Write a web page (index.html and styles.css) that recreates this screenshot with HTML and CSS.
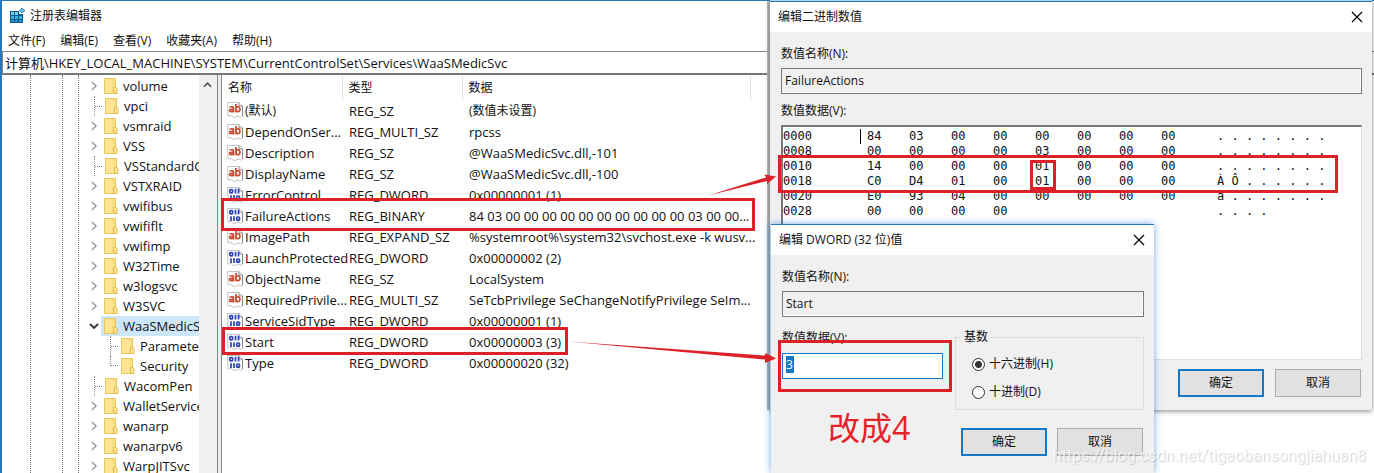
FILE: index.html
```
<!DOCTYPE html>
<html lang="zh-CN">
<head>
<meta charset="utf-8">
<title>注册表编辑器</title>
<link rel="stylesheet" href="styles.css">
</head>
<body>
<svg class="defs" aria-hidden="true">
  <symbol id="folder" viewBox="0 0 14 16">
    <path d="M.5.5h11v15H.5z" fill="#fbdf83" stroke="#ecc65d"/>
    <path d="M1 1h7v14H1z" fill="#fde592"/>
    <path d="M9.500 9.500q3-1 3.500 1v5H9.500z" fill="#fde592" stroke="#e3b84a"/>
  </symbol>
  <symbol id="right" viewBox="0 0 8 10"><path d="M2 1l4 4-4 4" fill="none" stroke="#a0a0a0" stroke-width="1.600"/></symbol>
  <symbol id="down" viewBox="0 0 10 8"><path d="M1 2l4 4 4-4" fill="none" stroke="#333" stroke-width="1.800"/></symbol>
  <symbol id="page" viewBox="0 0 16 16">
    <path d="M.5.5h11.500l3.500 3.500v10.500l-2 .5-1.500-1-2 .5-2 1-2-.5-2-1.500-3 .5z" fill="#fff" stroke="#c4c4c4"/>
    <path d="M12 .5V4h3.500v10" fill="none" stroke="#858c93"/>
  </symbol>
  <symbol id="str" viewBox="0 0 16 16">
    <use href="#page"/>
    <g fill="none" stroke="#c8472d" stroke-width="1.700">
      <path d="M2.500 5.200q4.200-1.300 4 1.200v4M6.500 7.400q-4.200-.3-4 1.300 1 2 4 0"/>
      <path d="M9 2v8.300M9 6q1-1.500 2.500-1.200 1.500.5 1.500 2.500-.2 2.300-2 2.300-1.200 0-2-1"/>
    </g>
  </symbol>
  <symbol id="bin" viewBox="0 0 16 16">
    <use href="#page"/>
    <g fill="none" stroke="#2841b5" stroke-width="1.700">
      <rect x="2.800" y="2.600" width="2.800" height="3.200" rx="1"/>
      <path d="M8.500 1.800v4.800M11.500 1.800v4.800M4 8.200V13M7 8.200V13"/>
      <rect x="9.700" y="9" width="2.800" height="3.200" rx="1"/>
    </g>
  </symbol>
</svg>

<main class="regedit">
  <header class="titlebar">
    <svg class="app-icon" viewBox="0 0 16 16" aria-hidden="true">
      <path d="M1 3h9v3h4v9H1z" fill="#0d5c8c"/>
      <path d="M2 4h3v3H2zM6 4h3v3H6z" fill="#6fd0f2"/>
      <path d="M2 8h3v3H2zM6 8h3v3H6zM10 8h3v3h-3z" fill="#35b0e0"/>
      <path d="M2 12h3v2H2zM6 12h3v2H6zM10 12h3v2h-3z" fill="#1c94cb"/>
      <path d="M13 0l3 2.500-3 2.500-2.500-2.500z" fill="#58c3ec" stroke="#0d6da3" stroke-width=".7"/>
    </svg>
    <h1>注册表编辑器</h1>
  </header>
  <nav class="menu">
    <button>文件(F)</button><button>编辑(E)</button><button>查看(V)</button><button>收藏夹(A)</button><button>帮助(H)</button>
  </nav>
  <input class="address" aria-label="路径" value="计算机\HKEY_LOCAL_MACHINE\SYSTEM\CurrentControlSet\Services\WaaSMedicSvc">
  <div class="panes">
    <div class="tree-pane">
      <div class="guides"><i></i><i></i><i></i></div>
      <ul class="tree">
        <li><svg class="tog"><use href="#right"/></svg><svg class="fold"><use href="#folder"/></svg><span>volume</span></li>
        <li class="leaf"><svg class="fold"><use href="#folder"/></svg><span>vpci</span></li>
        <li><svg class="tog"><use href="#right"/></svg><svg class="fold"><use href="#folder"/></svg><span>vsmraid</span></li>
        <li><svg class="tog"><use href="#right"/></svg><svg class="fold"><use href="#folder"/></svg><span>VSS</span></li>
        <li class="leaf"><svg class="fold"><use href="#folder"/></svg><span>VSStandardC</span></li>
        <li><svg class="tog"><use href="#right"/></svg><svg class="fold"><use href="#folder"/></svg><span>VSTXRAID</span></li>
        <li><svg class="tog"><use href="#right"/></svg><svg class="fold"><use href="#folder"/></svg><span>vwifibus</span></li>
        <li><svg class="tog"><use href="#right"/></svg><svg class="fold"><use href="#folder"/></svg><span>vwififlt</span></li>
        <li><svg class="tog"><use href="#right"/></svg><svg class="fold"><use href="#folder"/></svg><span>vwifimp</span></li>
        <li><svg class="tog"><use href="#right"/></svg><svg class="fold"><use href="#folder"/></svg><span>W32Time</span></li>
        <li><svg class="tog"><use href="#right"/></svg><svg class="fold"><use href="#folder"/></svg><span>w3logsvc</span></li>
        <li><svg class="tog"><use href="#right"/></svg><svg class="fold"><use href="#folder"/></svg><span>W3SVC</span></li>
        <li class="selected"><svg class="tog open"><use href="#down"/></svg><svg class="fold"><use href="#folder"/></svg><span>WaaSMedicS</span></li>
        <li class="child"><svg class="fold"><use href="#folder"/></svg><span>Parameter</span></li>
        <li class="child last"><svg class="fold"><use href="#folder"/></svg><span>Security</span></li>
        <li class="leaf"><svg class="fold"><use href="#folder"/></svg><span>WacomPen</span></li>
        <li><svg class="tog"><use href="#right"/></svg><svg class="fold"><use href="#folder"/></svg><span>WalletService</span></li>
        <li><svg class="tog"><use href="#right"/></svg><svg class="fold"><use href="#folder"/></svg><span>wanarp</span></li>
        <li><svg class="tog"><use href="#right"/></svg><svg class="fold"><use href="#folder"/></svg><span>wanarpv6</span></li>
        <li><svg class="tog"><use href="#right"/></svg><svg class="fold"><use href="#folder"/></svg><span>WarpJITSvc</span></li>
      </ul>
      <div class="scroll"><svg viewBox="0 0 10 8" aria-hidden="true"><path d="M1 6l4-4 4 4" fill="none" stroke="#505050" stroke-width="1.800"/></svg></div>
    </div>
    <div class="splitter"></div>
    <div class="list-pane">
      <table class="values">
        <colgroup><col class="c-name"><col class="c-type"><col class="c-data"></colgroup>
        <thead><tr><th>名称</th><th>类型</th><th>数据</th></tr></thead>
        <tbody>
          <tr><td><svg><use href="#str"/></svg><small>(默认)</small></td><td>REG_SZ</td><td><small>(数值未设置)</small></td></tr>
          <tr><td><svg><use href="#str"/></svg>DependOnSer...</td><td>REG_MULTI_SZ</td><td>rpcss</td></tr>
          <tr><td><svg><use href="#str"/></svg>Description</td><td>REG_SZ</td><td>@WaaSMedicSvc.dll,-101</td></tr>
          <tr><td><svg><use href="#str"/></svg>DisplayName</td><td>REG_SZ</td><td>@WaaSMedicSvc.dll,-100</td></tr>
          <tr><td><svg><use href="#bin"/></svg>ErrorControl</td><td>REG_DWORD</td><td>0x00000001 (1)</td></tr>
          <tr><td><svg><use href="#bin"/></svg>FailureActions</td><td>REG_BINARY</td><td>84 03 00 00 00 00 00 00 00 00 00 00 03 00 00...</td></tr>
          <tr><td><svg><use href="#str"/></svg>ImagePath</td><td>REG_EXPAND_SZ</td><td>%systemroot%\system32\svchost.exe -k wusv...</td></tr>
          <tr><td><svg><use href="#bin"/></svg>LaunchProtected</td><td>REG_DWORD</td><td>0x00000002 (2)</td></tr>
          <tr><td><svg><use href="#str"/></svg>ObjectName</td><td>REG_SZ</td><td>LocalSystem</td></tr>
          <tr><td><svg><use href="#str"/></svg>RequiredPrivile...</td><td>REG_MULTI_SZ</td><td>SeTcbPrivilege SeChangeNotifyPrivilege SeIm...</td></tr>
          <tr><td><svg><use href="#bin"/></svg>ServiceSidType</td><td>REG_DWORD</td><td>0x00000001 (1)</td></tr>
          <tr><td><svg><use href="#bin"/></svg>Start</td><td>REG_DWORD</td><td>0x00000003 (3)</td></tr>
          <tr><td><svg><use href="#bin"/></svg>Type</td><td>REG_DWORD</td><td>0x00000020 (32)</td></tr>
        </tbody>
      </table>
    </div>
  </div>
</main>

<section class="dialog binary" aria-label="编辑二进制数值">
  <header class="dialog-title"><h2>编辑二进制数值</h2><button class="close" aria-label="关闭"><svg viewBox="0 0 10 10"><path d="M0 0l10 10M10 0L0 10" stroke="#000" stroke-width="1.200"/></svg></button></header>
  <div class="dialog-body">
    <label for="bin-name">数值名称(N):</label>
    <input id="bin-name" class="field" readonly value="FailureActions">
    <label id="hex-label">数值数据(V):</label>
    <div class="hex-box">
      <table class="hex" aria-labelledby="hex-label">
        <colgroup><col class="h-off"><col span="8" class="h-byte"><col class="h-text"></colgroup>
        <tr><td>0000</td><td class="caret">84</td><td>03</td><td>00</td><td>00</td><td>00</td><td>00</td><td>00</td><td>00</td><td>. . . . . . . .</td></tr>
        <tr><td>0008</td><td>00</td><td>00</td><td>00</td><td>00</td><td>03</td><td>00</td><td>00</td><td>00</td><td>. . . . . . . .</td></tr>
        <tr><td>0010</td><td>14</td><td>00</td><td>00</td><td>00</td><td>01</td><td>00</td><td>00</td><td>00</td><td>. . . . . . . .</td></tr>
        <tr><td>0018</td><td>C0</td><td>D4</td><td>01</td><td>00</td><td>01</td><td>00</td><td>00</td><td>00</td><td>À Ô . . . . . .</td></tr>
        <tr><td>0020</td><td>E0</td><td>93</td><td>04</td><td>00</td><td>00</td><td>00</td><td>00</td><td>00</td><td>à . . . . . . .</td></tr>
        <tr><td>0028</td><td>00</td><td>00</td><td>00</td><td>00</td><td></td><td></td><td></td><td></td><td>. . . .</td></tr>
      </table>
    </div>
    <div class="actions"><button class="btn primary">确定</button><button class="btn">取消</button></div>
  </div>
</section>

<section class="dialog dword" aria-label="编辑 DWORD (32 位)值">
  <header class="dialog-title"><h2>编辑 DWORD (32 位)值</h2><button class="close" aria-label="关闭"><svg viewBox="0 0 10 10"><path d="M0 0l10 10M10 0L0 10" stroke="#000" stroke-width="1.200"/></svg></button></header>
  <div class="dialog-body">
    <label for="dw-name">数值名称(N):</label>
    <input id="dw-name" class="field" readonly value="Start">
    <div class="row">
      <div class="value-col">
        <label for="dw-value">数值数据(V):</label>
        <div class="edit"><input id="dw-value" value="3"></div>
      </div>
      <fieldset>
        <legend>基数</legend>
        <label class="radio"><input type="radio" name="base" checked>十六进制(H)</label>
        <label class="radio"><input type="radio" name="base">十进制(D)</label>
      </fieldset>
    </div>
    <div class="actions"><button class="btn primary">确定</button><button class="btn">取消</button></div>
  </div>
</section>

<svg class="marks" aria-hidden="true">
  <g fill="none" stroke="#dc2128" stroke-width="3">
    <rect x="222.500" y="199.500" width="531" height="30"/>
    <rect x="223.500" y="328.500" width="343" height="25"/>
    <rect x="779.500" y="156.500" width="557" height="35"/>
    <rect x="1031.500" y="161.500" width="23" height="27"/>
    <rect x="779.500" y="341.500" width="171" height="49"/>
  </g>
  <g fill="#dc2128">
    <path d="M708 195.500L766 177.500 764.500 174.500 776 176.500 767 184 767 181z"/>
    <path d="M568 341.500L765 355.500 765.500 353 776 358.500 765 363 765 359.500z"/>
  </g>
</svg>
<p class="note">改成4</p>
<p class="watermark">https://blog.csdn.net/tigaobansongjiahuan8</p>
</body>
</html>
```
FILE: styles.css
```
* { box-sizing: border-box; }
body {
  margin: 0;
  height: 100vh;
  overflow: hidden;
  position: relative;
  background: #fff;
  color: #111;
  font: 12px/20px "Open Sans", "Noto Sans CJK SC", sans-serif;
}
h1, h2, p, ul { margin: 0; padding: 0; font-size: 12px; font-weight: 400; }
button, input { font: inherit; color: inherit; }
.defs { position: absolute; width: 0; height: 0; }

.regedit {
  height: 100vh;
  display: flex;
  flex-direction: column;
  border-left: 2px solid #2877b8;
  border-top: 1px solid #2877b8;
}
.titlebar { display: flex; align-items: center; gap: 5px; height: 29px; padding-left: 7px; flex: none; }
.app-icon { width: 16px; height: 16px; }
.menu { display: flex; gap: 15px; height: 21px; padding-left: 6px; flex: none; }
.menu button { border: 0; background: none; padding: 0; line-height: 20px; }
.address {
  flex: none;
  height: 24px;
  border: 1px solid #888;
  border-bottom: 2px solid #777;
  border-right: 0;
  padding: 0 2px 1px;
  font-size: 13px;
  outline: 0;
}
.panes { flex: 1; display: flex; min-height: 0; }

.tree-pane { width: 215px; flex: none; display: flex; overflow: hidden; }
.guides { display: flex; width: 84px; flex: none; padding-left: 28px; }
.guides i { border-left: 1px dotted #777; width: 32px; }
.guides i:nth-child(2) { width: 16px; }
.guides i:nth-child(3) { width: 1px; }
.tree { list-style: none; flex: 1; min-width: 0; padding-top: 1px; font-size: 13px; }
.tree li {
  display: flex;
  align-items: center;
  height: 20px;
  padding-left: 3px;
  white-space: nowrap;
}
.tog { width: 10px; height: 10px; margin-right: 5px; flex: none; }
.fold { width: 14px; height: 16px; margin-right: 5px; flex: none; }
.leaf::before,
.child::before {
  content: "";
  width: 7px;
  height: 20px;
  margin: 0 3px 0 5px;
  flex: none;
  border-left: 1px dotted #888;
  background: linear-gradient(90deg, #888 1px, transparent 1px) 0 10px / 2px 1px repeat-x;
}
.child::before { margin-left: 21px; }
.child.last::before { height: 10px; align-self: flex-start; background-position: 0 9px; }
.selected { background: linear-gradient(90deg, transparent 15px, #cce6fb 15px); }
.scroll { width: 18px; flex: none; background: #f0f0f0; padding: 6px 4px; }
.scroll svg { display: block; width: 9px; height: 8px; }
.splitter { width: 5px; flex: none; background: #eee; border: solid #858585; border-width: 0 1px; }

.list-pane { flex: 1; min-width: 0; overflow: hidden; }
.values { table-layout: fixed; border-collapse: collapse; width: 529px; font-size: 13px; }
.c-name, .c-type { width: 120px; }
.values th {
  height: 25px;
  padding: 0 0 0 6px;
  border-right: 1px solid #e3e3e3;
  text-align: left;
  font-size: 12px;
  font-weight: 400;
}
.values td { height: 21px; padding: 0 0 1px 7px; line-height: 20px; white-space: nowrap; }
.values td:first-child { padding-left: 5px; }
.values small { font-size: 12px; }
.values svg { width: 16px; height: 16px; margin-right: 2px; vertical-align: -3px; }

.dialog { position: absolute; background: #f0f0f0; border-top: 1px solid #2877b8; }
.dialog-title {
  display: flex;
  justify-content: space-between;
  align-items: center;
  height: 30px;
  padding: 0 10px 0 8px;
  background: #fff;
}
.close { border: 0; background: none; padding: 0; width: 10px; height: 10px; line-height: 0; }
.close svg { width: 10px; height: 10px; overflow: visible; }
.dialog-body { padding: 12px 10px 13px 11px; display: flex; flex-direction: column; }
.dialog-body label { display: block; height: 20px; }
.field {
  width: 100%;
  height: 26px;
  margin: 4px 0 7px;
  padding: 0 3px 2px;
  border: 1px solid #7a7a7a;
  box-shadow: inset -1px -1px #fff;
  background: #f0f0f0;
  font-size: 12px;
  outline: 0;
}
.binary {
  left: 770px;
  right: 2px;
  top: 1px;
  box-shadow: 0 -1px #a9d3ee, 0 1px 5px rgba(0, 0, 0, .5), -3px 0 #bdbdbd;
}
.hex-box {
  height: 235px;
  margin: 4px 0 9px;
  padding-top: 2px;
  background: #fff;
  border: 1px solid #ddd;
  border-top: 2px solid #777;
  border-left: 2px solid #777;
}
.hex { table-layout: fixed; border-collapse: collapse; width: 546px; font: 12px/15px "DejaVu Sans Mono", monospace; }
.h-off { width: 84px; }
.h-byte { width: 42px; }
.hex td { padding: 0; height: 15px; white-space: nowrap; }
.hex td:last-child { padding-left: 14px; }
.hex .caret { position: relative; }
.hex .caret::before { content: ""; position: absolute; left: -7px; top: 0; width: 1px; height: 15px; background: #000; }
.actions { display: flex; justify-content: flex-end; gap: 11px; padding-right: 1px; }
.btn { width: 86px; height: 28px; padding: 0; border: 1px solid #adadad; background: #e1e1e1; line-height: 20px; }
.primary { border: 2px solid #1478c8; }

.dword {
  left: 771px;
  top: 224px;
  bottom: 0;
  width: 383px;
  box-shadow: 0 0 7px rgba(50, 130, 220, .7);
}
.row { display: flex; gap: 12px; height: 86px; }
.value-col { width: 161px; padding-top: 4px; }
.edit { height: 26px; margin-top: 5px; padding: 2px 3px; border: 1px solid #1478c8; background: #fff; }
.edit input { display: block; width: 8px; height: 17px; padding: 0; border: 0; background: #1478c8; color: #fff; outline: 0; }
fieldset { flex: 1; min-width: 0; height: 83px; margin: 3px 0 0; padding: 7px 16px 0; border: 1px solid #dcdcdc; }
legend { padding: 0 3px; margin-left: -11px; line-height: 20px; }
.dialog-body .radio { display: flex; align-items: center; gap: 4px; height: 20px; margin-bottom: 8px; }
.radio input {
  appearance: none;
  width: 13px;
  height: 13px;
  margin: 0;
  border: 1px solid #333;
  border-radius: 50%;
  background: #fff;
}
.radio input:checked { background: radial-gradient(circle, #333 3px, #fff 4px); }
.dword .actions { gap: 10px; margin-top: 18px; }

.marks { position: absolute; left: 0; top: 0; width: 100%; height: 100%; pointer-events: none; }
.note { position: absolute; left: 828px; top: 408px; color: #e4222a; font-size: 32px; line-height: 40px; }
.watermark {
  position: absolute;
  right: 8px;
  bottom: 6px;
  color: rgba(255, 255, 255, .75);
  font: 16px/22px Roboto, sans-serif;
  text-shadow: 1px 1px 1px rgba(0, 0, 0, .18);
}
```
